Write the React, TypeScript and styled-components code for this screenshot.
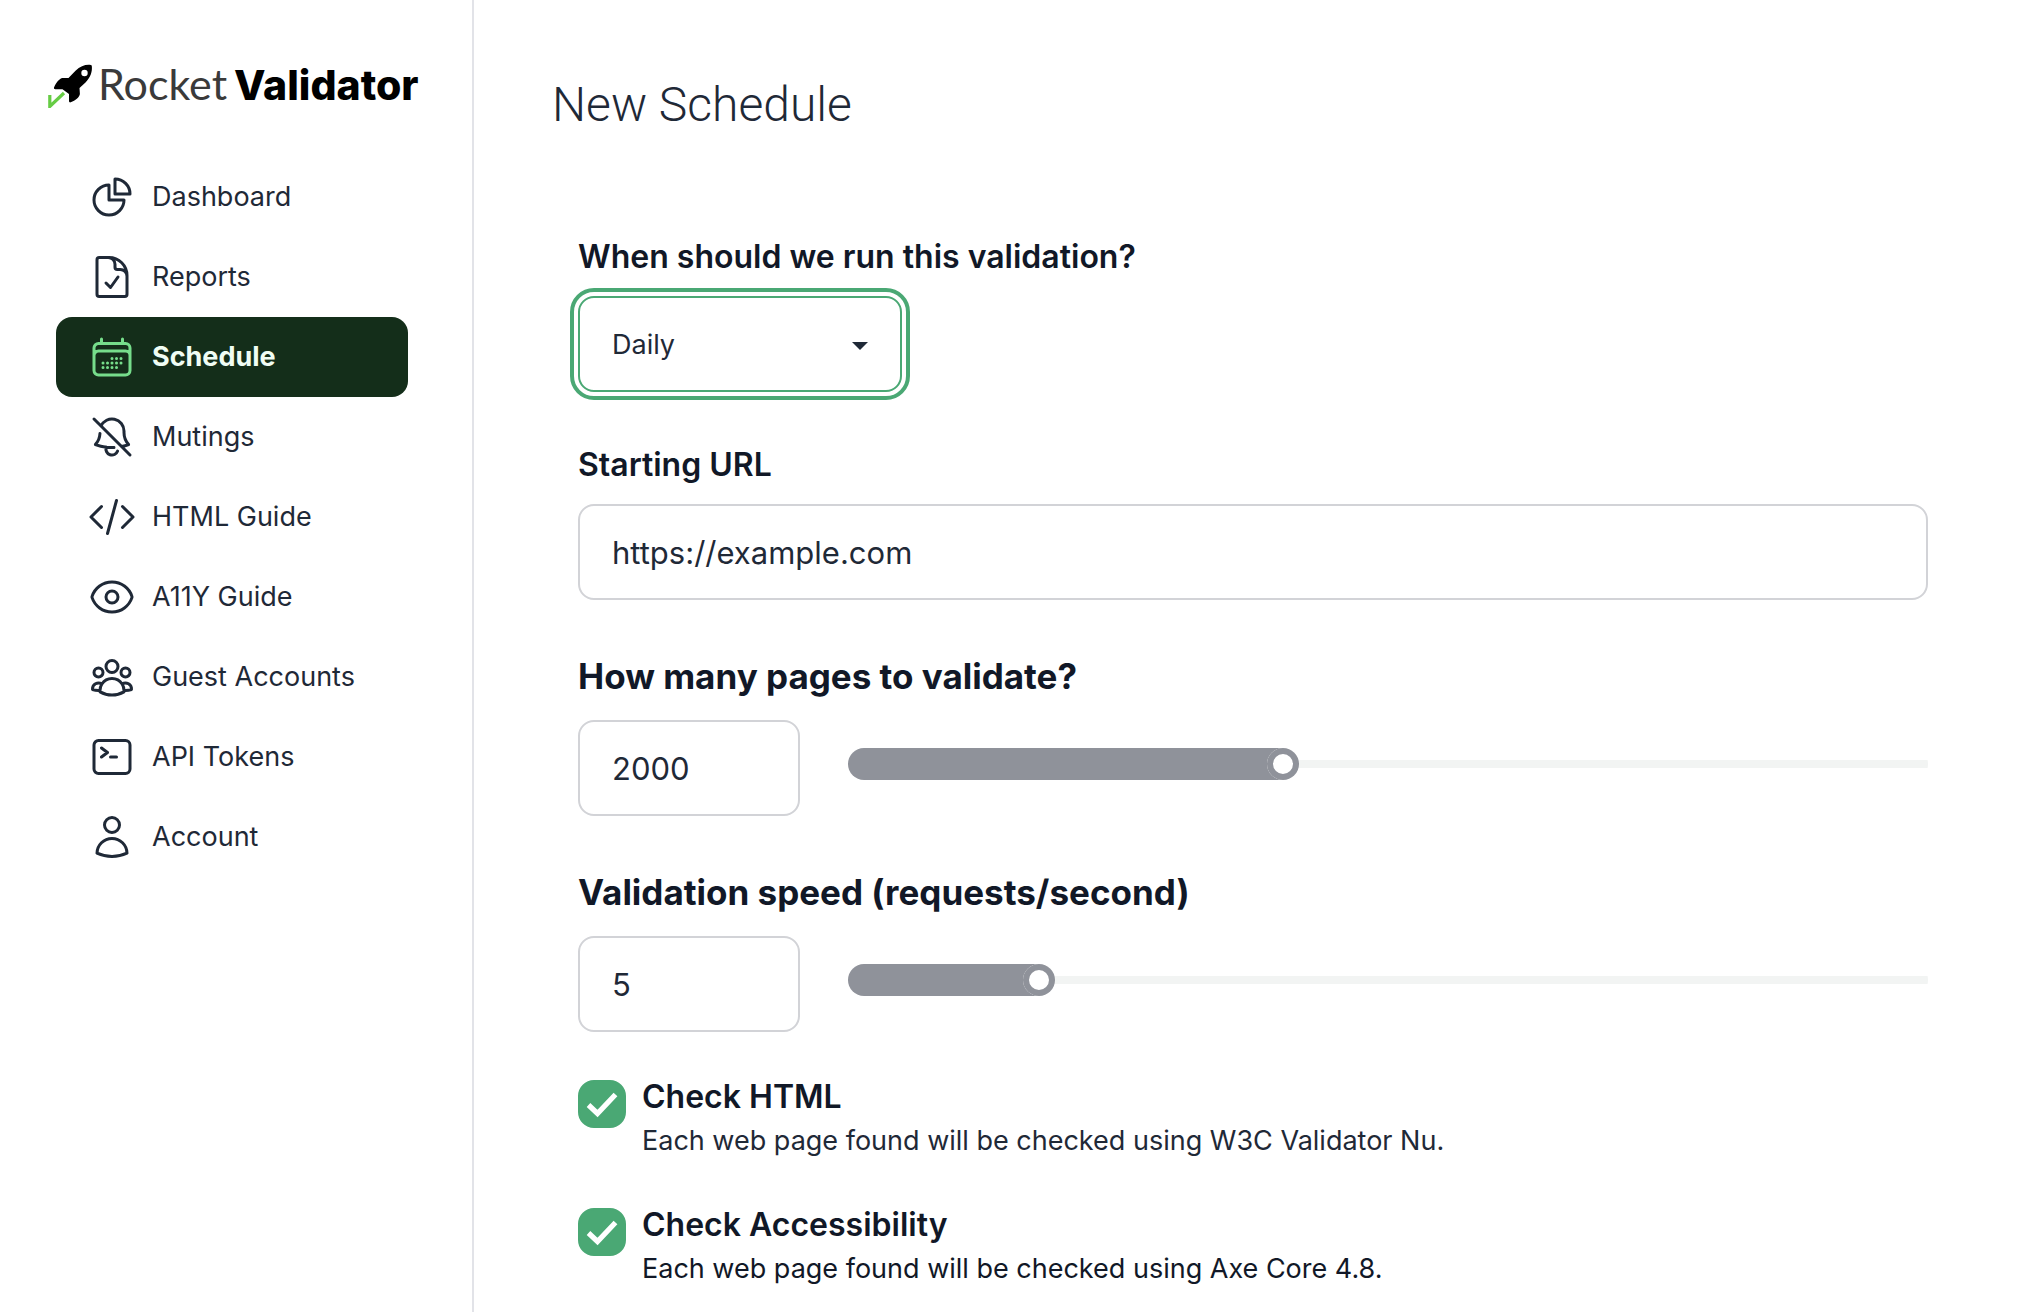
import React, { useState } from 'react';
import styled, { createGlobalStyle } from 'styled-components';
import type { IconType } from 'react-icons';
import {
  HiOutlineBellSlash,
  HiOutlineCalendarDays,
  HiOutlineChartPie,
  HiOutlineCodeBracket,
  HiOutlineCommandLine,
  HiOutlineDocumentCheck,
  HiOutlineEye,
  HiOutlineUser,
  HiOutlineUserGroup,
} from 'react-icons/hi2';

const colors = {
  ink: '#1f2937',
  strong: '#111827',
  green: '#4aa874',
  border: '#d2d3d7',
  divider: '#e2e3e8',
  range: '#8f929a',
  track: '#f2f4f3',
};

const GlobalStyle = createGlobalStyle`
  *, *::before, *::after { box-sizing: border-box; }
  body {
    margin: 0;
    background: #fff;
    color: ${colors.ink};
    font-family: Inter, "Noto Sans", sans-serif;
    font-size: 27px;
    line-height: 40px;
  }
  input, select { font: inherit; color: inherit; margin: 0; }
`;

const Layout = styled.div`
  display: flex;
  min-height: 100vh;
`;

const Sidebar = styled.aside`
  flex: 0 0 474px;
  min-width: 0;
  border-right: 2px solid ${colors.divider};
  padding: 60px 56px 24px 48px;
`;

const Logo = styled.a`
  display: flex;
  align-items: center;
  height: 48px;
  gap: 4px;
  margin-bottom: 49px;
  color: #3a3a3a;
  font-family: Lato, sans-serif;
  font-size: 43px;
  font-weight: 400;
  line-height: 48px;
  text-decoration: none;
  white-space: nowrap;

  svg { flex: none; }
`;

const LogoText = styled.span`
  display: flex;
  align-items: baseline;
  gap: 7px;
`;

const LogoStrong = styled.strong`
  color: #000;
  font-family: Inter, sans-serif;
  font-size: 41px;
  font-weight: 800;
`;

const NavList = styled.ul`
  list-style: none;
  margin: 0 8px;
  padding: 0;
`;

const NavLink = styled.a<{ $active?: boolean }>`
  display: flex;
  align-items: center;
  gap: 16px;
  height: 80px;
  padding: 0 32px;
  border-radius: 16px;
  background: ${(p) => (p.$active ? '#142e1a' : 'transparent')};
  color: ${(p) => (p.$active ? '#f0fdf4' : colors.ink)};
  font-weight: ${(p) => (p.$active ? 700 : 400)};
  text-decoration: none;

  svg {
    flex: none;
    width: 48px;
    height: 48px;
    color: ${(p) => (p.$active ? '#76dd8b' : 'inherit')};
  }
`;

const Main = styled.main`
  flex: 1;
  min-width: 0;
  padding: 80px 96px 24px 78px;
`;

const Title = styled.h1`
  margin: 0 0 107px;
  font-family: Roboto, Inter, sans-serif;
  font-size: 48px;
  font-weight: 300;
  line-height: 50px;
`;

const Form = styled.form`
  display: flex;
  flex-direction: column;
  padding-left: 26px;
`;

const Field = styled.div<{ $space: number }>`
  display: flex;
  flex-direction: column;
  align-items: flex-start;
  gap: 19px;
  margin-bottom: ${(p) => p.$space}px;
`;

const RangeField = styled(Field)`
  gap: 24px;
`;

const Label = styled.label<{ $large?: boolean }>`
  color: ${colors.strong};
  font-size: ${(p) => (p.$large ? 35 : 32)}px;
  font-weight: ${(p) => (p.$large ? 700 : 600)};
`;

const SelectWrap = styled.div`
  display: grid;
  align-items: center;
  width: 324px;

  > * { grid-area: 1 / 1; }
  > svg { justify-self: end; margin: 4px 34px 0 0; pointer-events: none; }
`;

const Select = styled.select`
  appearance: none;
  width: 100%;
  height: 96px;
  padding: 2px 64px 0 32px;
  border: 2px solid ${colors.green};
  border-radius: 16px;
  outline: 4px solid ${colors.green};
  outline-offset: 4px;
  background: #fff;
`;

const TextInput = styled.input`
  width: 100%;
  height: 96px;
  padding: 0 32px;
  border: 2px solid ${colors.border};
  border-radius: 16px;
  background: #fff;
  font-size: 31px;
`;

const RangeRow = styled.div`
  display: grid;
  grid-template-columns: 222px 1fr;
  align-items: start;
  gap: 48px;
  width: 100%;
`;

const Range = styled.input`
  appearance: none;
  width: 100%;
  height: 32px;
  margin-top: 28px;
  border-radius: 16px;
  overflow: hidden;
  background:
    linear-gradient(${colors.range}, ${colors.range}) left center / calc(16px + (100% - 32px) * var(--filled)) 100% no-repeat,
    linear-gradient(${colors.track}, ${colors.track}) center / 100% 8px no-repeat;

  &::-webkit-slider-thumb {
    appearance: none;
    width: 32px;
    height: 32px;
    border-radius: 50%;
    background: #fff;
    box-shadow: inset 0 0 0 6px ${colors.range};
  }
`;

const CheckRow = styled.div`
  display: grid;
  grid-template-columns: 48px 1fr;
  column-gap: 16px;

  & + & { margin-top: 47px; }
`;

const CheckControl = styled.span`
  display: grid;
  width: 48px;
  height: 48px;

  > * { grid-area: 1 / 1; }
  > svg { pointer-events: none; }
`;

const Checkbox = styled.input`
  appearance: none;
  width: 48px;
  height: 48px;
  border: 2px solid ${colors.border};
  border-radius: 16px;

  &:checked {
    border-color: ${colors.green};
    background: ${colors.green};
  }
`;

const CheckText = styled.div`
  display: flex;
  flex-direction: column;
  gap: 7px;
`;

const CheckLabel = styled.label`
  color: ${colors.strong};
  font-size: 32px;
  font-weight: 600;
  line-height: 34px;
`;

const Hint = styled.p<{ $dark?: boolean }>`
  margin: 0;
  color: ${(p) => (p.$dark ? colors.strong : colors.ink)};
`;

function RocketMark() {
  return (
    <svg width="46" height="48" viewBox="0 -1 46 48" aria-hidden="true">
      <path
        fill="#000"
        d="M42.800 4C38 3.200 32.500 5 27.500 9.800L20.500 17H14.500C11.500 17.500 8 21.500 6 26.500C5.700 27.500 6.300 28.200 7.300 28.200H14.500L21 33V40C21 41 21.700 41.600 22.700 41.300C27.500 39.500 31.300 36.500 31.900 33L31.500 27L37.500 21.500C42.500 16.500 44.500 10.500 43.800 5C43.700 4.400 43.400 4.100 42.800 4Z"
      />
      <circle cx="36.500" cy="12" r="3.200" fill="#fff" />
      <path d="M1.800 34V45.500L16 32" fill="none" stroke="#66cc44" strokeWidth="3.200" />
    </svg>
  );
}

const navItems: { label: string; icon: IconType; active?: boolean }[] = [
  { label: 'Dashboard', icon: HiOutlineChartPie },
  { label: 'Reports', icon: HiOutlineDocumentCheck },
  { label: 'Schedule', icon: HiOutlineCalendarDays, active: true },
  { label: 'Mutings', icon: HiOutlineBellSlash },
  { label: 'HTML Guide', icon: HiOutlineCodeBracket },
  { label: 'A11Y Guide', icon: HiOutlineEye },
  { label: 'Guest Accounts', icon: HiOutlineUserGroup },
  { label: 'API Tokens', icon: HiOutlineCommandLine },
  { label: 'Account', icon: HiOutlineUser },
];

interface RangeSettingProps {
  id: string;
  label: string;
  min: number;
  max: number;
  initial: number;
  space: number;
}

function RangeSetting({ id, label, min, max, initial, space }: RangeSettingProps) {
  const [value, setValue] = useState(initial);
  const filled = (value - min) / (max - min);
  const update = (e: React.ChangeEvent<HTMLInputElement>) => setValue(Number(e.target.value));
  return (
    <RangeField $space={space}>
      <Label $large htmlFor={id}>{label}</Label>
      <RangeRow>
        <TextInput id={id} inputMode="numeric" value={value} onChange={update} />
        <Range
          type="range"
          aria-label={label}
          min={min}
          max={max}
          value={value}
          onChange={update}
          style={{ '--filled': filled } as React.CSSProperties}
        />
      </RangeRow>
    </RangeField>
  );
}

interface CheckSettingProps {
  id: string;
  label: string;
  hint: string;
  dark?: boolean;
}

function CheckSetting({ id, label, hint, dark }: CheckSettingProps) {
  return (
    <CheckRow>
      <CheckControl>
        <Checkbox type="checkbox" id={id} defaultChecked aria-describedby={`${id}-hint`} />
        <svg width="48" height="48" viewBox="0 0 48 48" aria-hidden="true">
          <path d="M10.500 25L19.500 33.500L37.500 14.500" fill="none" stroke="#fff" strokeWidth="5.200" />
        </svg>
      </CheckControl>
      <CheckText>
        <CheckLabel htmlFor={id}>{label}</CheckLabel>
        <Hint id={`${id}-hint`} $dark={dark}>{hint}</Hint>
      </CheckText>
    </CheckRow>
  );
}

export default function App() {
  return (
    <>
      <GlobalStyle />
      <Layout>
        <Sidebar>
          <Logo href="#">
            <RocketMark />
            <LogoText>Rocket <LogoStrong>Validator</LogoStrong></LogoText>
          </Logo>
          <nav>
            <NavList>
              {navItems.map(({ label, icon: Icon, active }) => (
                <li key={label}>
                  <NavLink href="#" $active={active} aria-current={active ? 'page' : undefined}>
                    <Icon aria-hidden="true" />
                    {label}
                  </NavLink>
                </li>
              ))}
            </NavList>
          </nav>
        </Sidebar>
        <Main>
          <Title>New Schedule</Title>
          <Form>
            <Field $space={53}>
              <Label htmlFor="frequency">When should we run this validation?</Label>
              <SelectWrap>
                <Select id="frequency" defaultValue="Daily">
                  <option>Daily</option>
                  <option>Weekly</option>
                  <option>Monthly</option>
                </Select>
                <svg width="16" height="8" viewBox="0 0 16 8" aria-hidden="true">
                  <path d="M0 0H16L8 8Z" fill={colors.ink} />
                </svg>
              </SelectWrap>
            </Field>
            <Field $space={56}>
              <Label htmlFor="url">Starting URL</Label>
              <TextInput id="url" type="text" defaultValue="https://example.com" />
            </Field>
            <RangeSetting id="pages" label="How many pages to validate?" min={0} max={5000} initial={2000} space={56} />
            <RangeSetting id="speed" label="Validation speed (requests/second)" min={1} max={25} initial={5} space={48} />
            <CheckSetting id="check-html" label="Check HTML" hint="Each web page found will be checked using W3C Validator Nu." />
            <CheckSetting id="check-a11y" label="Check Accessibility" hint="Each web page found will be checked using Axe Core 4.8." dark />
          </Form>
        </Main>
      </Layout>
    </>
  );
}
